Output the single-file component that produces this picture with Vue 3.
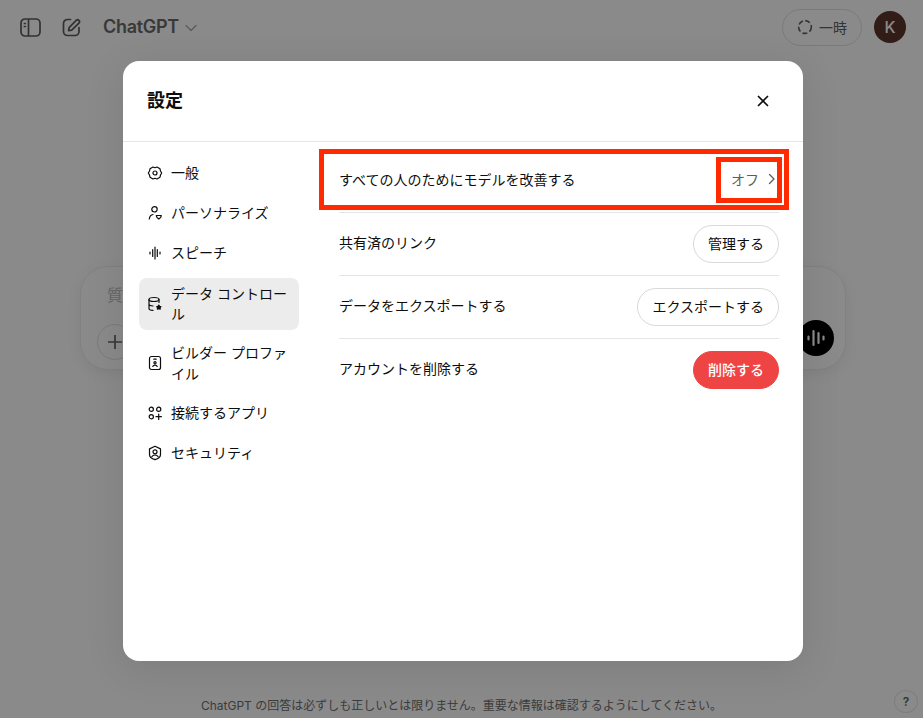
<script setup>
const nav = [
  { label: '一般', icon: 'gear' },
  { label: 'パーソナライズ', icon: 'person' },
  { label: 'スピーチ', icon: 'wave' },
  { label: 'データ コントロール', icon: 'data', cls: 'active tall first-tall' },
  { label: 'ビルダー プロファイル', icon: 'card', cls: 'tall second-tall' },
  { label: '接続するアプリ', icon: 'apps', cls: 'after-tall' },
  { label: 'セキュリティ', icon: 'shield' },
]
</script>

<template>
  <div class="page">
    <header class="topbar">
      <svg class="ic-side" width="21" height="19" viewBox="0 0 21 19" fill="none" stroke="currentColor" stroke-width="1.700">
        <rect x="1" y="1" width="19" height="17" rx="4" />
        <path d="M8.500 1v17" />
        <path d="M4.400 5.500h.9M4.400 8.500h.9" stroke-linecap="round" />
      </svg>
      <svg class="ic-edit" width="19" height="19" viewBox="0 0 19 19" fill="none" stroke="currentColor" stroke-width="1.700" stroke-linecap="round" stroke-linejoin="round">
        <path d="M8.500 1.500H5.500a4 4 0 0 0-4 4v8a4 4 0 0 0 4 4h7.500a4 4 0 0 0 4-4v-4" />
        <path d="M6.600 12.600l.5-3L14.200 2.400a1.900 1.900 0 0 1 2.700 2.700L9.700 12.200z" />
      </svg>
      <span class="brand">ChatGPT</span>
      <svg class="chev" width="12" height="8" viewBox="0 0 12 8" fill="none" stroke="currentColor" stroke-width="1.200" stroke-linecap="round" stroke-linejoin="round"><path d="M1 1.500l5 5 5-5" /></svg>
      <span class="spacer"></span>
      <button class="temp">
        <svg width="16" height="16" viewBox="0 0 16 16" fill="none" stroke="currentColor" stroke-width="1.600" stroke-dasharray="5 2.400"><circle cx="8" cy="8" r="6.400" /></svg>
        <span>一時</span>
      </button>
      <span class="avatar">K</span>
    </header>

    <main class="main">
      <div class="composer">
        <div class="ask">質</div>
        <div class="composer-row">
          <span class="plus">
            <svg width="16" height="16" viewBox="0 0 16 16" fill="none" stroke="currentColor" stroke-width="1.700"><path d="M8 1v14M1 8h14" /></svg>
          </span>
          <span class="voice">
            <svg width="18" height="18" viewBox="0 0 18 18" fill="none" stroke="currentColor" stroke-width="2.200" stroke-linecap="round"><path d="M1.500 7.500v3M6.500 2v14M11.500 4v10M16.500 7.500v3" /></svg>
          </span>
        </div>
      </div>
    </main>

    <footer class="foot">ChatGPT の回答は必ずしも正しいとは限りません。重要な情報は確認するようにしてください。</footer>

    <div class="overlay"></div>
    <span class="help">?</span>

    <section class="modal">
      <div class="modal-head">
        <h2>設定</h2>
        <svg class="close" width="12" height="12" viewBox="0 0 12 12" fill="none" stroke="#0d0d0d" stroke-width="1.700" stroke-linecap="round"><path d="M1.500 1.500l9 9M10.500 1.500l-9 9" /></svg>
      </div>
      <div class="modal-body">
        <nav class="side">
          <div v-for="item in nav" :key="item.label" class="nav-item" :class="item.cls">
            <svg class="nav-ic" width="16" height="16" viewBox="0 0 16 16" fill="none" stroke="#0d0d0d" stroke-width="1.200" stroke-linecap="round" stroke-linejoin="round">
              <template v-if="item.icon === 'gear'">
                <path d="M6 2l2 .7L10 2l3 1.800.5 2.200 1.200 2-1.200 2-.5 2.200L10 14l-2-.7L6 14l-3-1.800L2.500 10 1.300 8l1.200-2L3 3.800z" />
                <circle cx="8" cy="8" r="2" />
              </template>
              <template v-else-if="item.icon === 'person'">
                <circle cx="7.500" cy="4.300" r="2.700" />
                <path d="M2.300 14c.3-2.700 1.700-4.200 3.700-4.500" />
                <path d="M9.300 10.500h5l-.6 1.900-1.900 1.600-1.900-1.600z" />
              </template>
              <template v-else-if="item.icon === 'wave'">
                <path d="M3 7v2M5.700 4.500v7M8 2v12M10.300 4.500v7M13 7v2" />
              </template>
              <template v-else-if="item.icon === 'data'">
                <ellipse cx="7" cy="3.500" rx="5" ry="2" />
                <path d="M2 3.500v9c0 1 1.600 1.800 4 1.900M12 3.500v3M2 8c0 1 1.600 1.800 4 2" />
                <path d="M11.800 9.200l.8 1.200 1.300.3-.8 1 .1 1.400-1.400-.5-1.400.5.100-1.400-.8-1 1.300-.3z" fill="#0d0d0d" />
              </template>
              <template v-else-if="item.icon === 'card'">
                <rect x="2.500" y="1.500" width="11" height="13" rx="2" />
                <path d="M6.800 4.200h2.400" />
                <circle cx="8" cy="7.800" r="1.100" />
                <path d="M5.800 11.500c.4-1 1.200-1.400 2.200-1.400s1.800.4 2.200 1.400" />
              </template>
              <template v-else-if="item.icon === 'apps'">
                <circle cx="4.300" cy="4.300" r="2.100" />
                <circle cx="11.700" cy="4.300" r="2.100" />
                <circle cx="4.300" cy="11.700" r="2.100" />
                <path d="M11.700 9v5.400M9 11.700h5.400" />
              </template>
              <template v-else>
                <path d="M8 1.300l5.500 2.600v5.600c0 2.400-2.400 4.300-5.500 5.200-3.100-.9-5.500-2.800-5.500-5.200V3.900z" />
                <circle cx="8" cy="6.800" r="2" />
                <path d="M4.800 11.800c.7-1.200 1.800-1.800 3.200-1.800s2.500.6 3.200 1.800" />
              </template>
            </svg>
            <span class="nav-label">{{ item.label }}</span>
          </div>
        </nav>
        <div class="content">
          <div class="row">
            <span>すべての人のためにモデルを改善する</span>
            <span class="value">オフ
              <svg width="8" height="12" viewBox="0 0 8 12" fill="none" stroke="#5d5d5d" stroke-width="1.300" stroke-linecap="round" stroke-linejoin="round"><path d="M1.500 1.500l4.500 4.500-4.500 4.500" /></svg>
            </span>
          </div>
          <div class="row">
            <span>共有済のリンク</span>
            <button class="btn">管理する</button>
          </div>
          <div class="row">
            <span>データをエクスポートする</span>
            <button class="btn">エクスポートする</button>
          </div>
          <div class="row last">
            <span>アカウントを削除する</span>
            <button class="btn danger">削除する</button>
          </div>
        </div>
      </div>
      <div class="mark mark-row"></div>
      <div class="mark mark-value"></div>
    </section>
  </div>
</template>

<style scoped>
.page {
  position: relative;
  width: 923px;
  height: 718px;
  overflow: hidden;
  display: flex;
  flex-direction: column;
  background: #fff;
  color: #0d0d0d;
  font-family: Inter, "Noto Sans CJK JP", "Liberation Sans", sans-serif;
}
.topbar {
  display: flex;
  align-items: center;
  height: 54px;
  padding: 0 17px 0 20px;
  color: #5c5c5c;
}
.ic-edit { margin-left: 21px; }
.brand {
  margin-left: 22px;
  font-size: 18px;
  font-weight: 600;
  letter-spacing: -.3px;
  color: #696969;
  line-height: 24px;
}
.chev { margin-left: 6px; margin-top: 2px; color: #a6a6a6; }
.spacer { flex: 1; }
.temp {
  display: flex;
  align-items: center;
  justify-content: center;
  gap: 6px;
  width: 80px;
  height: 37px;
  padding: 0;
  border: 1px solid #e2e2e2;
  border-radius: 19px;
  background: #fff;
  color: #606060;
  font: inherit;
  font-size: 14px;
}
.avatar {
  display: flex;
  align-items: center;
  justify-content: center;
  width: 32px;
  height: 32px;
  margin-left: 12px;
  border-radius: 50%;
  background: #5c342e;
  color: #fff;
  font-size: 16px;
  font-weight: 500;
}
.main { flex: 1; padding: 212px 77px 0 80px; }
.composer {
  height: 104px;
  padding: 16px 11px 12px 16px;
  box-sizing: border-box;
  border: 1px solid #eee;
  border-radius: 28px;
  box-shadow: 0 4px 14px rgba(0, 0, 0, .07);
  background: #fff;
}
.ask { padding-left: 10px; font-size: 16px; line-height: 24px; color: #bdbdbd; white-space: nowrap; }
.composer-row {
  display: flex;
  justify-content: space-between;
  align-items: flex-start;
  margin-top: 13px;
}
.plus {
  display: flex;
  align-items: center;
  justify-content: center;
  box-sizing: border-box;
  width: 36px;
  height: 36px;
  margin-top: 4px;
  border: 1px solid #e2e2e2;
  border-radius: 50%;
  color: #666;
}
.voice {
  display: flex;
  align-items: center;
  justify-content: center;
  width: 36px;
  height: 36px;
  border-radius: 50%;
  background: #000;
  color: #fff;
}
.foot {
  height: 26px;
  padding-top: 5px;
  box-sizing: border-box;
  text-align: center;
  font-size: 12px;
  line-height: 18px;
  color: #6f6f6f;
}
.overlay {
  position: absolute;
  inset: 0;
  background: rgba(0, 0, 0, .46);
}
.help {
  position: absolute;
  left: 894px;
  top: 690px;
  width: 24px;
  height: 23px;
  box-sizing: border-box;
  display: flex;
  align-items: center;
  justify-content: center;
  border: 1px solid #7e7e7e;
  border-radius: 50%;
  color: #333;
  font-size: 12px;
  font-weight: 600;
}
.modal {
  position: absolute;
  left: 123px;
  top: 61px;
  width: 680px;
  height: 600px;
  box-sizing: border-box;
  display: flex;
  flex-direction: column;
  border-radius: 16px;
  background: #fff;
  box-shadow: 0 8px 40px rgba(0, 0, 0, .1);
}
.modal-head {
  display: flex;
  align-items: center;
  justify-content: space-between;
  height: 81px;
  flex: none;
  box-sizing: border-box;
  padding: 0 34px 0 24px;
  border-bottom: 1px solid #e5e5e5;
}
.modal-head h2 {
  margin: 0;
  font-size: 18px;
  font-weight: 600;
  line-height: 28px;
  color: #0d0d0d;
}
.modal-body { display: flex; flex: 1; min-height: 0; }
.side { width: 160px; flex: none; margin: 11px 0 0 16px; }
.nav-item {
  display: flex;
  align-items: center;
  gap: 8px;
  min-height: 40px;
  box-sizing: border-box;
  padding: 0 8px;
  border-radius: 8px;
  font-size: 14px;
  line-height: 20px;
  color: #0d0d0d;
}
.nav-ic { flex: none; }
.nav-item.tall { min-height: 52px; padding: 6px 8px; }
.nav-item.first-tall { margin-top: 5px; }
.nav-item.second-tall { margin-top: 6px; line-height: 21px; }
.nav-item.after-tall { margin-top: 3px; }
.nav-item.active { background: #ececec; }
.content { flex: 1; margin: 8px 24px 0 40px; }
.row {
  display: flex;
  align-items: center;
  justify-content: space-between;
  height: 63px;
  box-sizing: border-box;
  border-bottom: 1px solid #e5e5e5;
  font-size: 14px;
  color: #0d0d0d;
}
.row > span { padding-bottom: 4px; }
.row.last { border-bottom-color: transparent; }
.value { display: flex; align-items: center; gap: 9px; padding-right: 3px; margin-left: auto; color: #5d5d5d; }
.btn {
  height: 38px;
  padding: 0 14px 2px;
  border: 1px solid #d9d9d9;
  border-radius: 19px;
  background: #fff;
  color: #0d0d0d;
  font: inherit;
  font-size: 14px;
}
.btn.danger {
  border-color: #ef4444;
  background: #ef4444;
  color: #fff;
  font-weight: 500;
}
.mark {
  position: absolute;
  box-sizing: border-box;
  border: 5px solid #ff2a00;
}
.mark-row { left: 196px; top: 88px; width: 470px; height: 61px; }
.mark-value { left: 593px; top: 96px; width: 66px; height: 46px; }
</style>
